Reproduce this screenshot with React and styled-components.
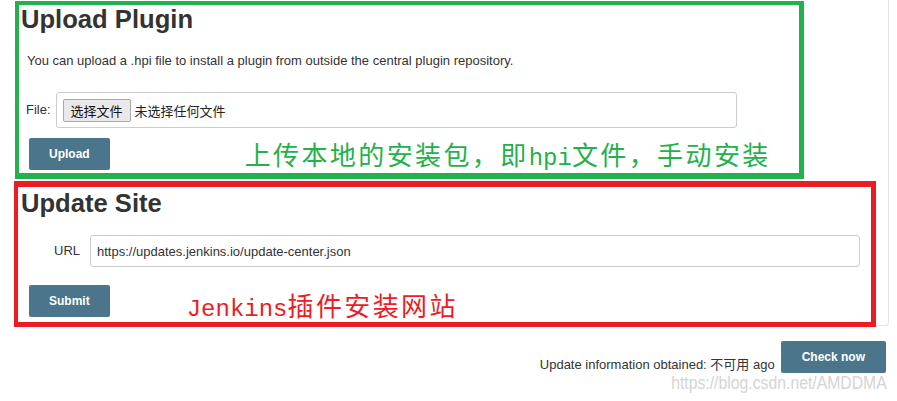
import React from "react";
import styled, { createGlobalStyle } from "styled-components";

const GlobalStyle = createGlobalStyle`
  html, body { margin: 0; padding: 0; background: #fff; }
  body {
    font-family: "Liberation Sans", Arial, "Noto Sans CJK SC", sans-serif;
    font-size: 13px;
    color: #333;
  }
  * { box-sizing: border-box; }
`;

const Page = styled.div`
  width: 897px;
  height: 401px;
  overflow: hidden;
  display: flex;
  flex-direction: column;
`;

const Panel = styled.div`
  margin-left: 14px;
  width: 875px;
  border-right: 1px solid #e6e6e6;
  border-bottom: 1px solid #e6e6e6;
  border-bottom-right-radius: 4px;
  display: flex;
  flex-direction: column;
  align-items: flex-start;
`;

const Marked = styled.section`
  display: flex;
  flex-direction: column;
  align-items: flex-start;
  border-style: solid;
  border-color: ${(p) => p.$color};
  border-width: ${(p) => p.$border};
  margin: ${(p) => p.$margin};
  width: ${(p) => p.$width}px;
  padding-bottom: ${(p) => p.$padBottom}px;
`;

const Heading = styled.h1`
  margin: ${(p) => p.$top}px 0 0 ${(p) => p.$left}px;
  font-family: "Liberation Sans", Arial, sans-serif;
  font-size: 25.6px;
  font-weight: bold;
  line-height: 28px;
  color: #333;
`;

const Intro = styled.p`
  margin: 20px 0 0 8px;
  line-height: 16px;
  color: #333;
`;

const FileRow = styled.div`
  margin: 23px 0 0 7px;
  display: flex;
  align-items: center;
  gap: 5px;
`;

const Label = styled.span`
  line-height: 16px;
  color: #333;
`;

const FileBox = styled.div`
  width: 681px;
  height: 36px;
  border: 1px solid #ccc;
  border-radius: 3px;
  display: flex;
  align-items: center;
  gap: 4px;
  padding-left: 6px;
  background: #fff;
`;

const FileButton = styled.span`
  height: 23px;
  padding: 0 7px;
  display: inline-flex;
  align-items: center;
  background: #e9e9e9;
  border: 1px solid #a8a8a8;
  border-radius: 2px;
  color: #111;
  font-family: "Noto Sans CJK SC", sans-serif;
  font-size: 13px;
`;

const FileStatus = styled.span`
  font-family: "Noto Sans CJK SC", sans-serif;
  font-size: 13px;
  color: #222;
`;

const ActionRow = styled.div`
  height: 32px;
  margin: ${(p) => p.$top}px 0 0 ${(p) => p.$left}px;
  display: flex;
  align-items: flex-start;
`;

const Button = styled.button`
  height: 32px;
  padding: 0 ${(p) => p.$pad || 20}px;
  border: none;
  border-radius: 2px;
  background: #4b758b;
  color: #fff;
  font-family: "Liberation Sans", Arial, sans-serif;
  font-size: 12px;
  font-weight: bold;
  cursor: pointer;
`;

const Note = styled.span`
  margin-left: ${(p) => p.$gap}px;
  margin-top: ${(p) => p.$shift}px;
  color: ${(p) => p.$color};
  font-family: "Noto Sans CJK SC", sans-serif;
  font-size: 26px;
  letter-spacing: 2.4px;
  line-height: 32px;
  white-space: nowrap;
`;

const NoteLatin = styled.span`
  font-family: "Liberation Mono", monospace;
  font-size: 24px;
  letter-spacing: 0;
`;

const UrlRow = styled.div`
  align-self: stretch;
  margin: 18px 11px 0 36px;
  display: flex;
  align-items: center;
  gap: 10px;
`;

const UrlInput = styled.input`
  flex: 1;
  height: 32px;
  border: 1px solid #ccc;
  border-radius: 3px;
  padding: 0 6px;
  font-family: "Liberation Sans", Arial, sans-serif;
  font-size: 13px;
  color: #333;
  outline: none;
`;

const Footer = styled.div`
  margin-top: 15px;
  padding-right: 11px;
  display: flex;
  justify-content: flex-end;
  align-items: flex-end;
  gap: 6px;
`;

const Status = styled.span`
  line-height: 16px;
  color: #333;
`;

const Watermark = styled.div`
  align-self: flex-end;
  margin-right: 10px;
  font-family: "Liberation Sans", Arial, sans-serif;
  font-size: 19px;
  line-height: 20px;
  color: #d4d4d4;
  transform: scaleX(0.83);
  transform-origin: right center;
  white-space: nowrap;
`;

export default function App() {
  return (
    <Page>
      <GlobalStyle />
      <Panel>
        <Marked
          $color="#22b14c"
          $border="4px 5px 6px 4px"
          $margin="1px 0 0 1px"
          $width={789}
          $padBottom={3}
        >
          <Heading $top={0} $left={2}>Upload Plugin</Heading>
          <Intro>
            You can upload a .hpi file to install a plugin from outside the central plugin repository.
          </Intro>
          <FileRow>
            <Label>File:</Label>
            <FileBox>
              <FileButton>选择文件</FileButton>
              <FileStatus>未选择任何文件</FileStatus>
            </FileBox>
          </FileRow>
          <ActionRow $top={10} $left={10}>
            <Button>Upload</Button>
            <Note $gap={135} $shift={0} $color="#22b14c">
              上传本地的安装包，即<NoteLatin>hpi</NoteLatin>文件，手动安装
            </Note>
          </ActionRow>
        </Marked>
        <Marked
          $color="#ed1c24"
          $border="6px 5px 5px 4px"
          $margin="2px 0 -2px 0"
          $width={862}
          $padBottom={5}
        >
          <Heading $top={2} $left={3}>Update Site</Heading>
          <UrlRow>
            <Label>URL</Label>
            <UrlInput readOnly defaultValue="https://updates.jenkins.io/update-center.json" />
          </UrlRow>
          <ActionRow $top={18} $left={11}>
            <Button>Submit</Button>
            <Note $gap={77} $shift={4} $color="#ed1c24">
              <NoteLatin>Jenkins</NoteLatin>插件安装网站
            </Note>
          </ActionRow>
        </Marked>
      </Panel>
      <Footer>
        <Status>Update information obtained: 不可用 ago</Status>
        <Button $pad={21}>Check now</Button>
      </Footer>
      <Watermark>https://blog.csdn.net/AMDDMA</Watermark>
    </Page>
  );
}
